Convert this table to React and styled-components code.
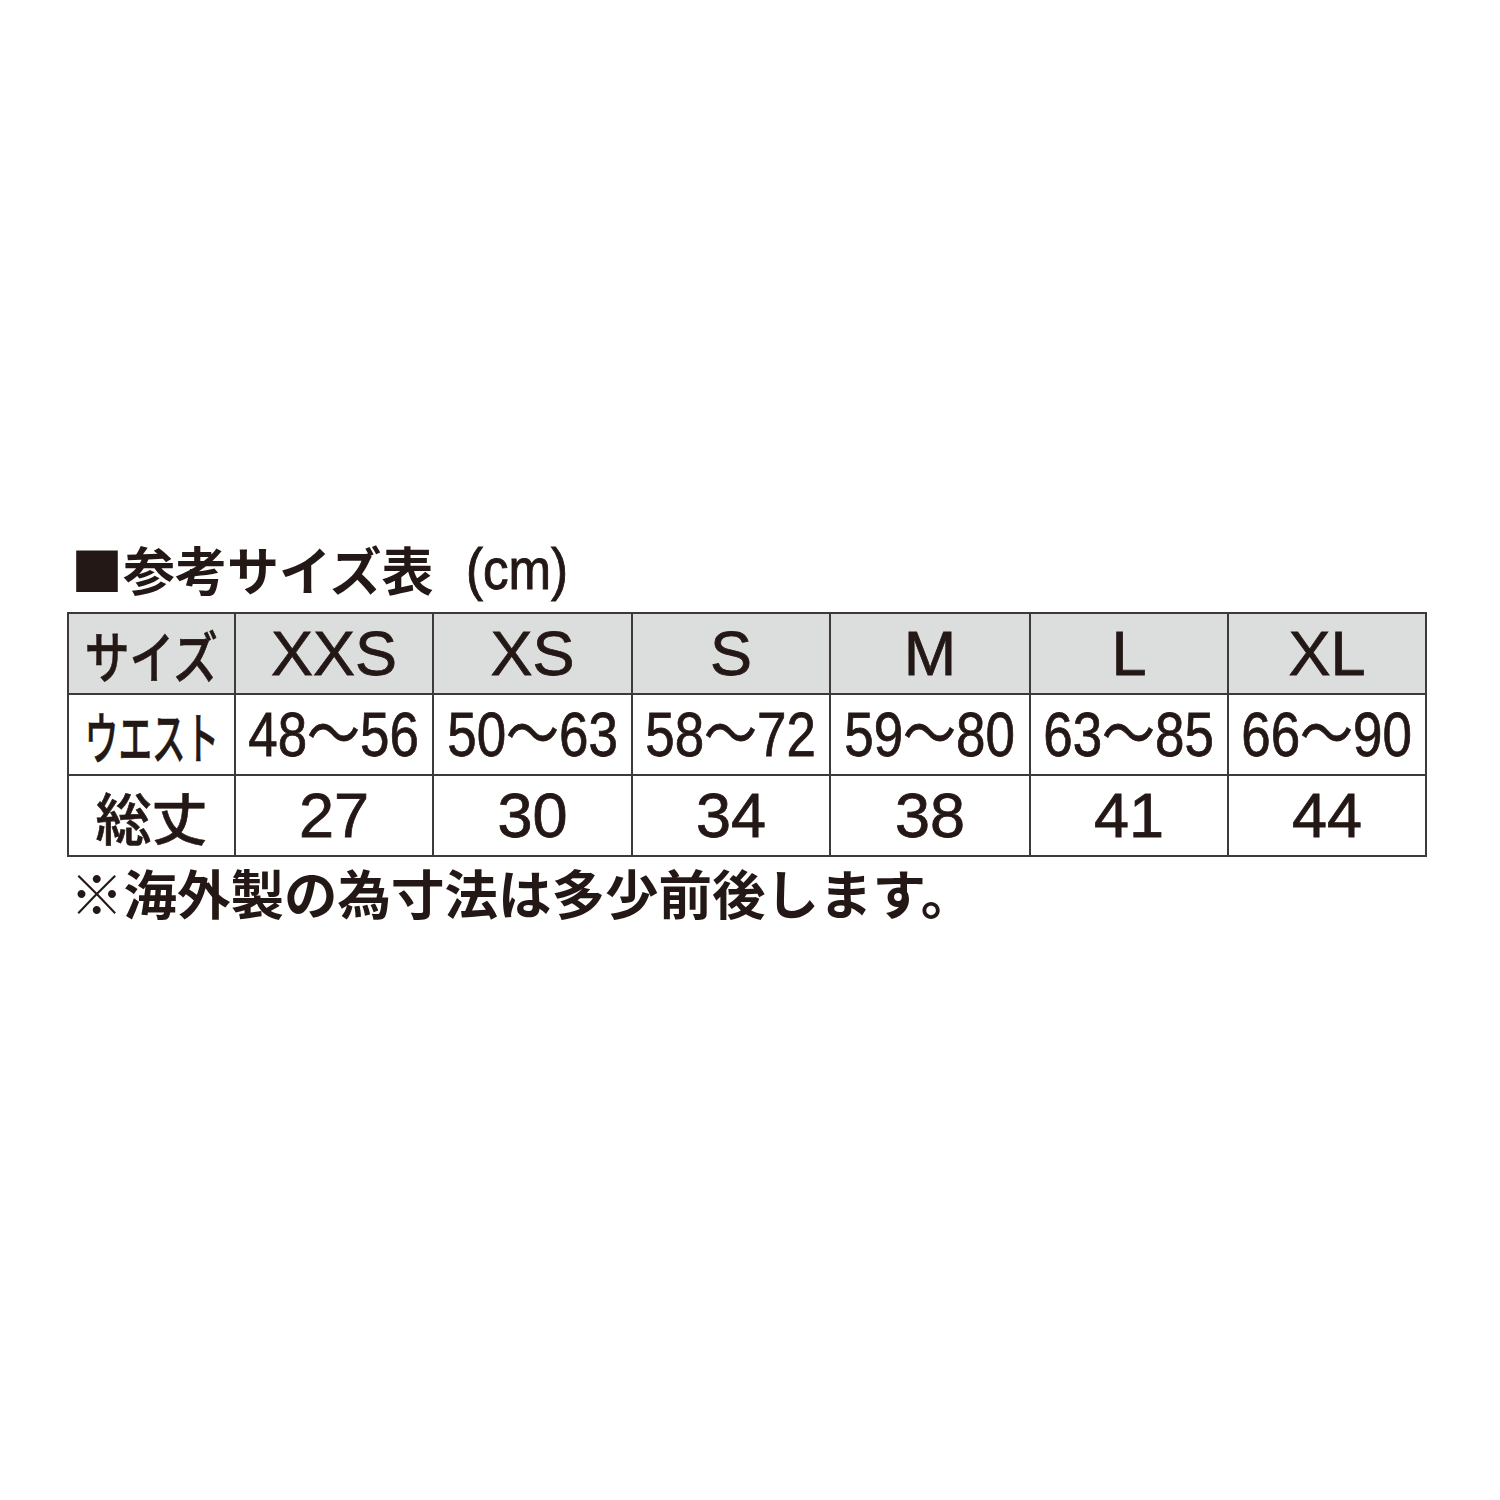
import React from 'react'
import styled, { createGlobalStyle } from 'styled-components'

const GlobalStyle = createGlobalStyle`
  html, body {
    margin: 0;
    padding: 0;
    background: #ffffff;
  }
  body {
    font-family: "Liberation Sans", "Noto Sans CJK JP", sans-serif;
    color: #231815;
  }
`

const sizes = ['XXS', 'XS', 'S', 'M', 'L', 'XL']
const waist = ['48〜56', '50〜63', '58〜72', '59〜80', '63〜85', '66〜90']
const length = ['27', '30', '34', '38', '41', '44']
const colWidths = [167, 198, 199, 198, 200, 198, 198]

const App = () => {
  return (
    <Page>
      <GlobalStyle />
      <Title>
        ■参考サイズ表
        <Unit>
          <Squeeze $sx={0.88}>(cm)</Squeeze>
        </Unit>
      </Title>

      <Table>
        <colgroup>
          {colWidths.map((w, i) => (
            <col key={i} style={{ width: w }} />
          ))}
        </colgroup>
        <tbody>
          <Row $head>
            <Label>
              <Fit>
                <Squeeze $sx={0.8}>サイズ</Squeeze>
              </Fit>
            </Label>
            {sizes.map((s) => (
              <Cell key={s}>{s}</Cell>
            ))}
          </Row>
          <Row>
            <Label>
              <Fit>
                <Squeeze $sx={0.6}>ウエスト</Squeeze>
              </Fit>
            </Label>
            {waist.map((w) => (
              <Cell key={w}>
                <Fit>
                  <Squeeze $sx={0.84}>{w}</Squeeze>
                </Fit>
              </Cell>
            ))}
          </Row>
          <Row>
            <Label>総丈</Label>
            {length.map((l) => (
              <Cell key={l}>{l}</Cell>
            ))}
          </Row>
        </tbody>
      </Table>

      <Note>※海外製の為寸法は多少前後します。</Note>
    </Page>
  )
}

const Page = styled.div`
  width: 1500px;
  height: 1500px;
  box-sizing: border-box;
  padding: 537px 0 0 67px;
`

const Title = styled.h2`
  display: flex;
  align-items: center;
  margin: 0 0 11px 4px;
  font-family: "Noto Sans CJK JP", sans-serif;
  font-weight: 700;
  font-size: 52px;
  line-height: 64px;
  white-space: nowrap;
`

const Unit = styled.span`
  margin-left: 26px;
  font-family: "Liberation Sans", sans-serif;
  font-weight: 400;
  font-size: 58px;
  -webkit-text-stroke: 1px #231815;
`

const Table = styled.table`
  border-collapse: collapse;
  table-layout: fixed;
  width: 1359px;
  border: 2px solid #3e3a39;
`

const Row = styled.tr`
  height: 81px;
  background: ${({ $head }) => ($head ? '#dcdddd' : '#ffffff')};
`

const Cell = styled.td`
  border: 2px solid #3e3a39;
  padding: 0;
  text-align: center;
  vertical-align: middle;
  font-family: "Liberation Sans", "Noto Sans CJK JP", sans-serif;
  font-size: 63px;
  line-height: 1;
  white-space: nowrap;
  -webkit-text-stroke: 0.8px #231815;
`

const Label = styled(Cell)`
  font-family: "Noto Sans CJK JP", sans-serif;
  font-weight: 500;
  font-size: 56px;
  -webkit-text-stroke: 0.6px #231815;
`

const Fit = styled.div`
  display: flex;
  justify-content: center;
  align-items: center;
`

const Squeeze = styled.span`
  display: inline-block;
  flex-shrink: 0;
  transform: scaleX(${({ $sx }) => $sx});
  transform-origin: center;
`

const Note = styled.p`
  margin: 3px 0 0 3px;
  font-family: "Noto Sans CJK JP", sans-serif;
  font-weight: 700;
  font-size: 53.5px;
  line-height: 64px;
  white-space: nowrap;
`

export default App
